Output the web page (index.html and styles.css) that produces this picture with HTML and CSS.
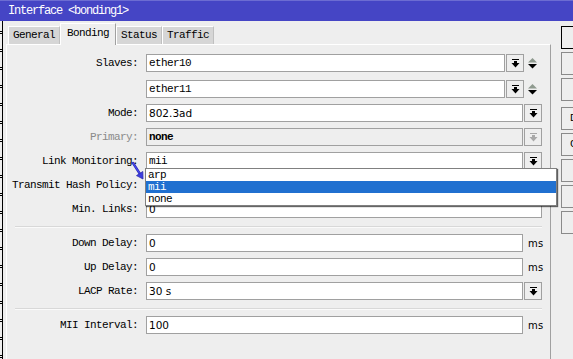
FILE: index.html
```html
<!DOCTYPE html>
<html lang="en">
<head>
  <meta charset="UTF-8">
  <link rel="stylesheet" href="styles.css">
</head>
<body>

  <div class="titlebar">Interface &lt;bonding1&gt;</div>

  <div class="frame">
    <div class="edge"></div>

    <div class="main">
      <div class="tabs">
        <div class="tab">General</div>
        <div class="tab active">Bonding</div>
        <div class="tab">Status</div>
        <div class="tab">Traffic</div>
      </div>

      <div class="panel">
        <div class="row">
          <label>Slaves:</label>
          <div class="field">ether10</div>
          <div class="drop"><svg width="9" height="9" viewBox="0 0 9 9"><path d="M1 0h7v1H1z M3 2h3v2h2.5L4.5 8.5 0.5 4H3z" fill="#000"/></svg></div>
          <div class="updown"><svg width="10" height="11" viewBox="0 0 10 11"><path d="M4.5 0L9 4.5H0z" fill="#8f9a8f"/><path d="M0 6h9l-4.5 4.5z" fill="#000"/></svg></div>
        </div>
        <div class="row second">
          <label></label>
          <div class="field">ether11</div>
          <div class="drop"><svg width="9" height="9" viewBox="0 0 9 9"><path d="M1 0h7v1H1z M3 2h3v2h2.5L4.5 8.5 0.5 4H3z" fill="#000"/></svg></div>
          <div class="updown"><svg width="10" height="11" viewBox="0 0 10 11"><path d="M4.5 0L9 4.5H0z" fill="#8f9a8f"/><path d="M0 6h9l-4.5 4.5z" fill="#000"/></svg></div>
        </div>
        <div class="row">
          <label>Mode:</label>
          <div class="field sans">802.3ad</div>
          <div class="drop"><svg width="9" height="9" viewBox="0 0 9 9"><path d="M1 0h7v1H1z M3 2h3v2h2.5L4.5 8.5 0.5 4H3z" fill="#000"/></svg></div>
        </div>
        <div class="row disabled">
          <label>Primary:</label>
          <div class="field">none</div>
          <div class="drop"><svg width="9" height="9" viewBox="0 0 9 9"><path d="M1 0h7v1H1z M3 2h3v2h2.5L4.5 8.5 0.5 4H3z" fill="#a8a8a8"/></svg></div>
        </div>
        <div class="row open">
          <label>Link Monitoring:</label>
          <div class="field">mii</div>
          <div class="drop"><svg width="9" height="9" viewBox="0 0 9 9"><path d="M1 0h7v1H1z M3 2h3v2h2.5L4.5 8.5 0.5 4H3z" fill="#000"/></svg></div>

          <svg class="cursor" width="16" height="22" viewBox="0 0 16 22">
            <path d="M3 3L10 14" stroke="#2a2ab8" stroke-width="2.4" stroke-linecap="round"/>
            <path d="M3 3L10 14" stroke="#4a4aee" stroke-width="1.2" stroke-linecap="round"/>
            <polygon points="13,19 12.8,11.5 6.5,15.6" fill="#3c3ce0" stroke="#2a2ab0" stroke-width="0.8"/>
          </svg>

          <ul class="popup">
            <li>arp</li>
            <li class="selected">mii</li>
            <li>none</li>
          </ul>
        </div>
        <div class="row">
          <label>Transmit Hash Policy:</label>
          <div class="field">layer 2</div>
          <div class="drop"><svg width="9" height="9" viewBox="0 0 9 9"><path d="M1 0h7v1H1z M3 2h3v2h2.5L4.5 8.5 0.5 4H3z" fill="#000"/></svg></div>
        </div>
        <div class="row">
          <label>Min. Links:</label>
          <div class="field sans">0</div>
        </div>

        <div class="sep"></div>

        <div class="row">
          <label>Down Delay:</label>
          <div class="field sans">0</div>
          <div class="unit">ms</div>
        </div>
        <div class="row">
          <label>Up Delay:</label>
          <div class="field sans">0</div>
          <div class="unit">ms</div>
        </div>
        <div class="row">
          <label>LACP Rate:</label>
          <div class="field sans">30 s</div>
          <div class="drop"><svg width="9" height="9" viewBox="0 0 9 9"><path d="M1 0h7v1H1z M3 2h3v2h2.5L4.5 8.5 0.5 4H3z" fill="#000"/></svg></div>
        </div>

        <div class="sep"></div>

        <div class="row">
          <label>MII Interval:</label>
          <div class="field sans">100</div>
          <div class="unit">ms</div>
        </div>
      </div>
    </div>

    <div class="buttons">
      <div class="btn default">OK</div>
      <div class="btn">Cancel</div>
      <div class="btn">Apply</div>
      <div class="btn group">Disable</div>
      <div class="btn">Comment</div>
      <div class="btn">Copy</div>
      <div class="btn">Remove</div>
      <div class="btn">Torch</div>
    </div>
  </div>

</body>
</html>
```

FILE: styles.css
```css
html, body {
  margin: 0;
  padding: 0;
  width: 573px;
  height: 359px;
  overflow: hidden;
}

body {
  background-color: #eeeeee;
  font-family: "Liberation Mono", "DejaVu Sans Mono", monospace;
  font-size: 11px;
  letter-spacing: -0.6px;
  color: #000;
}

.titlebar {
  height: 20px;
  line-height: 20px;
  padding-left: 8px;
  background-color: #4545c5;
  border-top: 1px solid #6c6cd2;
  color: #fff;
  font-size: 12px;
  letter-spacing: -1.2px;
}

.frame {
  display: flex;
  height: 338px;
}

.edge {
  width: 2px;
  border-right: 1px solid #000;
  background: repeating-linear-gradient(to bottom, transparent 0, transparent 10px, #000 10px, #000 11px, transparent 11px, transparent 12px, #000 12px, #000 13px, transparent 13px, transparent 18px);
}

.main {
  width: 545px;
  margin-left: 3px;
  display: flex;
  flex-direction: column;
}

/* tabs */
.tabs {
  height: 23px;
  display: flex;
  align-items: flex-end;
  padding-left: 2px;
}

.tab {
  height: 17px;
  line-height: 17px;
  padding: 0 4px;
  background-color: #d6d6d6;
  border: 1px solid #fff;
  border-bottom: none;
  border-right-color: #c0c0c0;
}

.tab.active {
  position: relative;
  height: 21px;
  line-height: 19px;
  padding: 0 6px;
  margin-bottom: -1px;
  background-color: #eeeeee;
  border-right-color: #a0a0a0;
  z-index: 1;
}

/* form panel */
.panel {
  flex: 1;
  display: flex;
  flex-direction: column;
  gap: 6px;
  padding: 9px 8px 0 0;
  border-top: 1px solid #fff;
  border-left: 1px solid #fff;
  border-right: 1px solid #a0a0a0;
}

.row {
  display: flex;
  align-items: center;
  height: 18px;
}

.row.second {
  margin-top: 2px;
}

.row label {
  width: 131px;
  margin-right: 8px;
  text-align: right;
  white-space: nowrap;
}

.field {
  flex: 1;
  height: 18px;
  line-height: 16px;
  box-sizing: border-box;
  padding: 0 2px;
  background-color: #fff;
  border: 1px solid #a0a0a0;
  white-space: nowrap;
}

.field.sans {
  font-family: "DejaVu Sans", sans-serif;
  font-size: 10.5px;
  letter-spacing: 0;
}

.drop {
  width: 18px;
  height: 18px;
  margin-left: 1px;
  box-sizing: border-box;
  display: flex;
  align-items: center;
  justify-content: center;
  background-color: #eeeeee;
  border: 1px solid #a0a0a0;
}

.updown {
  width: 18px;
  height: 18px;
  display: flex;
  align-items: center;
  padding-left: 4px;
  box-sizing: border-box;
}

.unit {
  width: 19px;
  padding-left: 5px;
  box-sizing: border-box;
  font-family: "DejaVu Sans", sans-serif;
  font-size: 10px;
  letter-spacing: 0.3px;
}

.row.disabled label {
  color: #8a8a8a;
}

.row.disabled .field {
  background-color: #eeeeee;
  font-weight: bold;
}

.sep {
  margin: 2px 0 0 8px;
  border-top: 1px solid #d8d8d8;
  border-bottom: 1px solid #fafafa;
}

/* open dropdown */
.row.open {
  position: relative;
}

.popup {
  position: absolute;
  left: 138px;
  top: 16px;
  width: 412px;
  margin: 0;
  padding: 0;
  list-style: none;
  box-sizing: border-box;
  background-color: #fff;
  border: 1px solid #808080;
  box-shadow: 1px 1px 1px rgba(0, 0, 0, 0.6);
  z-index: 2;
}

.popup li {
  height: 12px;
  line-height: 12px;
  padding-left: 2px;
}

.popup li.selected {
  background-color: #2070d0;
  color: #fff;
}

.cursor {
  position: absolute;
  left: 123px;
  top: 8px;
  z-index: 3;
}

/* side buttons */
.buttons {
  flex: 1;
  margin-left: 10px;
  padding-top: 5px;
  overflow: hidden;
}

.btn {
  width: 60px;
  height: 23px;
  line-height: 21px;
  margin-bottom: 3px;
  box-sizing: border-box;
  text-align: center;
  background-color: #eeeeee;
  border: 1px solid #8a8a8a;
}

.btn.default {
  border-color: #000;
}

.btn.group {
  margin-top: 6px;
}
```
